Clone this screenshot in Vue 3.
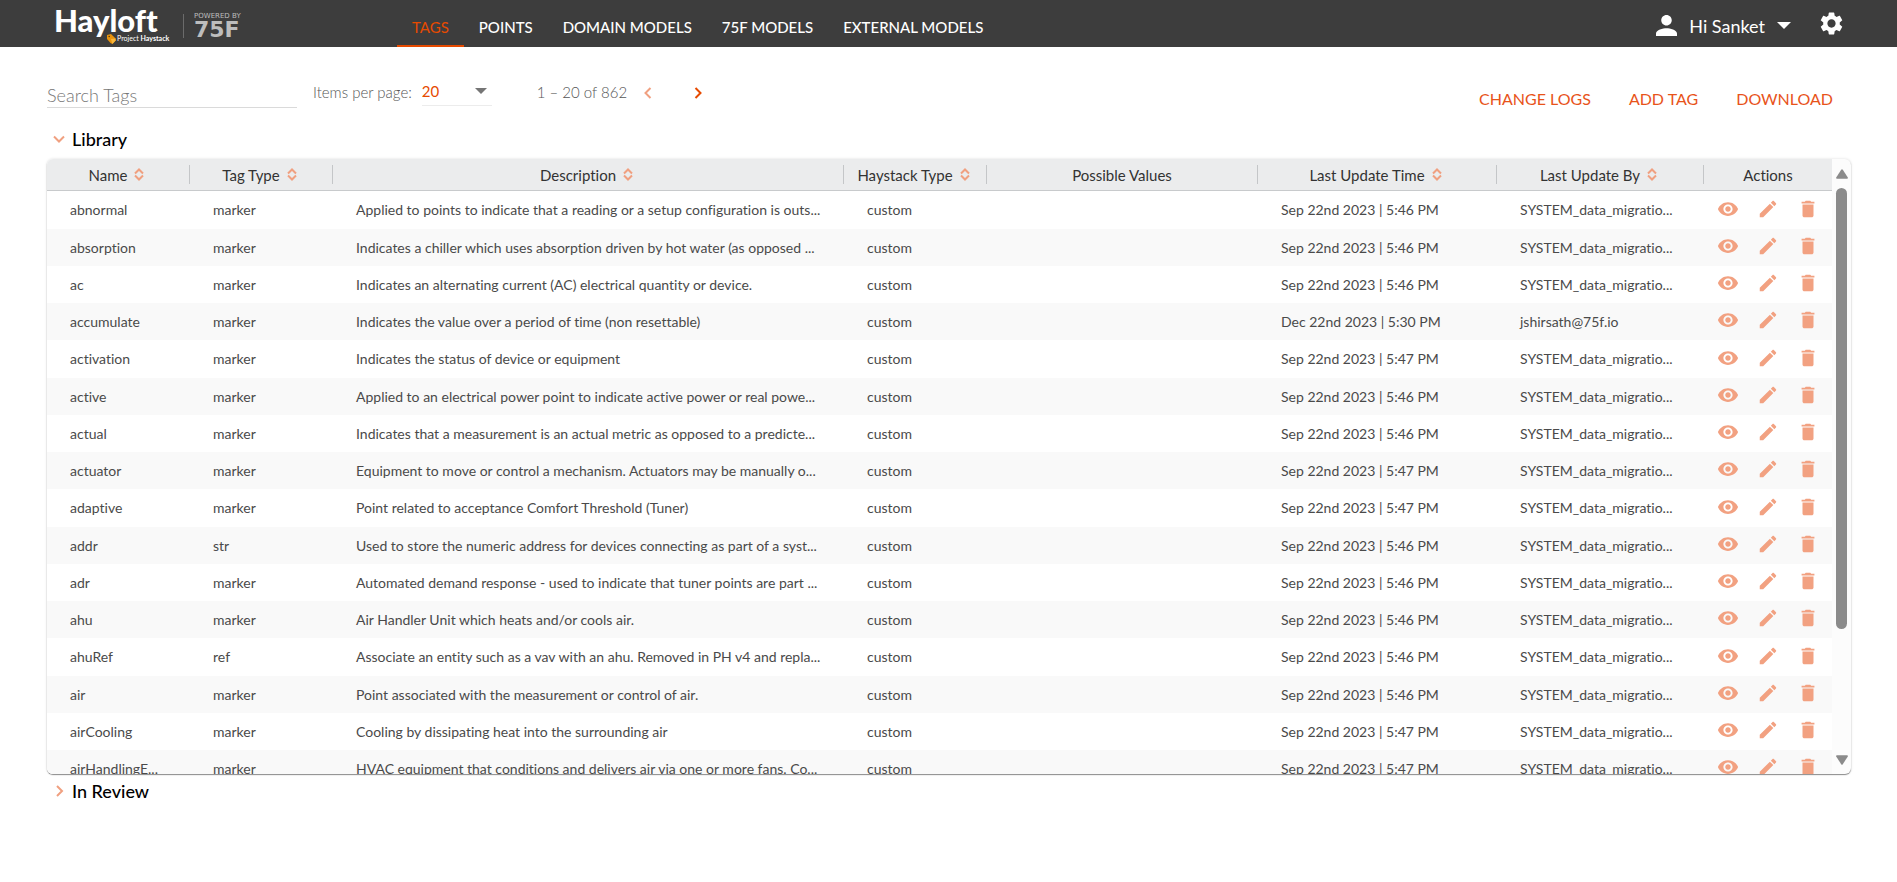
<script setup>
import { ref } from 'vue'

const search = ref('')
const pageSize = ref('20')

const nav = ['TAGS', 'POINTS', 'DOMAIN MODELS', '75F MODELS', 'EXTERNAL MODELS']

const columns = [
  { key: 'name', label: 'Name', sortable: true },
  { key: 'type', label: 'Tag Type', sortable: true },
  { key: 'desc', label: 'Description', sortable: true },
  { key: 'haystack', label: 'Haystack Type', sortable: true },
  { key: 'values', label: 'Possible Values', sortable: false },
  { key: 'time', label: 'Last Update Time', sortable: true },
  { key: 'by', label: 'Last Update By', sortable: true },
  { key: 'actions', label: 'Actions', sortable: false }
]

const system = 'SYSTEM_data_migratio...'
const sep46 = 'Sep 22nd 2023 | 5:46 PM'
const sep47 = 'Sep 22nd 2023 | 5:47 PM'

const rows = [
  ['abnormal', 'marker', 'Applied to points to indicate that a reading or a setup configuration is outs...', sep46, system],
  ['absorption', 'marker', 'Indicates a chiller which uses absorption driven by hot water (as opposed ...', sep46, system],
  ['ac', 'marker', 'Indicates an alternating current (AC) electrical quantity or device.', sep46, system],
  ['accumulate', 'marker', 'Indicates the value over a period of time (non resettable)', 'Dec 22nd 2023 | 5:30 PM', 'jshirsath@75f.io'],
  ['activation', 'marker', 'Indicates the status of device or equipment', sep47, system],
  ['active', 'marker', 'Applied to an electrical power point to indicate active power or real powe...', sep46, system],
  ['actual', 'marker', 'Indicates that a measurement is an actual metric as opposed to a predicte...', sep46, system],
  ['actuator', 'marker', 'Equipment to move or control a mechanism. Actuators may be manually o...', sep47, system],
  ['adaptive', 'marker', 'Point related to acceptance Comfort Threshold (Tuner)', sep47, system],
  ['addr', 'str', 'Used to store the numeric address for devices connecting as part of a syst...', sep46, system],
  ['adr', 'marker', 'Automated demand response - used to indicate that tuner points are part ...', sep46, system],
  ['ahu', 'marker', 'Air Handler Unit which heats and/or cools air.', sep46, system],
  ['ahuRef', 'ref', 'Associate an entity such as a vav with an ahu. Removed in PH v4 and repla...', sep46, system],
  ['air', 'marker', 'Point associated with the measurement or control of air.', sep46, system],
  ['airCooling', 'marker', 'Cooling by dissipating heat into the surrounding air', sep47, system],
  ['airHandlingE...', 'marker', 'HVAC equipment that conditions and delivers air via one or more fans. Co...', sep47, system]
].map(([name, type, desc, time, by]) => ({ name, type, desc, time, by }))
</script>

<template>
  <div class="page">
    <header class="topbar">
      <a href="#" class="brand">
        <span class="hayloft">
          <span class="wordmark">Hayloft</span>
          <span class="project">
            <svg class="tagicon" viewBox="0 0 9 10" aria-hidden="true">
              <path d="M0 1l4-1 4.6 4.4v2L5.400 10 3.500 9 0 5z" fill="#e8930c" />
              <path d="M4 5l4.600-.6v2L5.400 10z" fill="#f7b53a" />
              <circle cx="2.200" cy="2.500" r=".8" fill="#5a3a10" />
            </svg>
            <span>Project <b>Haystack</b></span>
          </span>
        </span>
        <span class="powered">
          <span class="by">POWERED BY</span>
          <span class="seventyfive">75F</span>
        </span>
      </a>
      <nav class="nav">
        <a v-for="(item, i) in nav" :key="item" href="#" :class="{ active: i === 0 }">{{ item }}</a>
      </nav>
      <button class="user" type="button">
        <svg class="person" viewBox="4 4 16 16" aria-hidden="true"><path d="M12 12c2.210 0 4-1.790 4-4s-1.790-4-4-4-4 1.790-4 4 1.790 4 4 4zm0 2c-2.670 0-8 1.340-8 4v2h16v-2c0-2.660-5.330-4-8-4z" /></svg>
        <span>Hi Sanket</span>
        <svg class="caret" viewBox="0 0 14 7" aria-hidden="true"><path d="M0 0h14L7 7z" /></svg>
      </button>
      <button class="gear" type="button" aria-label="Settings">
        <svg viewBox="2 2 20 20" aria-hidden="true"><path d="M19.140 12.940c.04-.3.06-.61.06-.94 0-.32-.02-.64-.07-.94l2.030-1.580c.18-.14.23-.41.12-.61l-1.920-3.320c-.12-.22-.37-.29-.59-.22l-2.390.96c-.5-.38-1.030-.7-1.620-.94l-.36-2.540c-.04-.24-.24-.41-.48-.41h-3.840c-.24 0-.43.17-.47.41l-.36 2.540c-.59.24-1.130.57-1.620.94l-2.390-.96c-.22-.08-.47 0-.59.22L2.740 8.870c-.12.21-.08.47.12.61l2.030 1.580c-.05.3-.09.63-.09.94s.02.64.07.94l-2.030 1.580c-.18.14-.23.41-.12.61l1.920 3.320c.12.22.37.29.59.22l2.390-.96c.5.38 1.030.7 1.620.94l.36 2.540c.05.24.24.41.48.41h3.840c.24 0 .44-.17.47-.41l.36-2.540c.59-.24 1.130-.56 1.620-.94l2.390.96c.22.08.47 0 .59-.22l1.920-3.320c.12-.22.07-.47-.12-.61l-2.010-1.580zM12 15.600c-1.980 0-3.600-1.620-3.600-3.600s1.620-3.600 3.600-3.600 3.600 1.620 3.600 3.600-1.620 3.600-3.600 3.600z" /></svg>
      </button>
    </header>

    <main class="content">
      <div class="toolbar">
        <input v-model="search" class="search" type="text" placeholder="Search Tags" aria-label="Search Tags" />
        <div class="paginator">
          <label for="page-size">Items per page:</label>
          <span class="size">
            <select id="page-size" v-model="pageSize">
              <option>20</option>
              <option>50</option>
              <option>100</option>
            </select>
            <svg viewBox="0 0 12 6" aria-hidden="true"><path d="M0 0h12L6 6z" fill="#757575" /></svg>
          </span>
          <span class="range">1 – 20 of 862</span>
          <button class="step" type="button" aria-label="Previous page" disabled>
            <svg viewBox="0 0 8 12" aria-hidden="true"><path d="M6.500 1L1.500 6l5 5" /></svg>
          </button>
          <button class="step" type="button" aria-label="Next page">
            <svg viewBox="0 0 8 12" aria-hidden="true"><path d="M1.500 1l5 5-5 5" /></svg>
          </button>
        </div>
        <div class="links">
          <button type="button">CHANGE LOGS</button>
          <button type="button">ADD TAG</button>
          <button type="button">DOWNLOAD</button>
        </div>
      </div>

      <button class="section" type="button" aria-expanded="true">
        <svg viewBox="0 0 12 12" aria-hidden="true"><path d="M1 3.500l5 5 5-5" /></svg>
        <span>Library</span>
      </button>

      <div class="panel">
        <div class="viewport">
          <table>
            <colgroup>
              <col v-for="c in columns" :key="c.key" :class="'c-' + c.key" />
            </colgroup>
            <thead>
              <tr>
                <th v-for="c in columns" :key="c.key" scope="col">
                  <div class="head">
                    <span>{{ c.label }}</span>
                    <button v-if="c.sortable" type="button" :aria-label="'Sort by ' + c.label">
                      <svg viewBox="0 0 10 13" aria-hidden="true"><path d="M1 5.500l4-4 4 4M1 7.500l4 4 4-4" /></svg>
                    </button>
                  </div>
                </th>
              </tr>
            </thead>
            <tbody>
              <tr v-for="r in rows" :key="r.name">
                <td>{{ r.name }}</td>
                <td>{{ r.type }}</td>
                <td>{{ r.desc }}</td>
                <td>custom</td>
                <td></td>
                <td>{{ r.time }}</td>
                <td>{{ r.by }}</td>
                <td class="actions">
                  <div>
                    <button type="button" :aria-label="'View ' + r.name">
                      <svg viewBox="0 0 24 24" aria-hidden="true"><path d="M12 4.500C7 4.500 2.730 7.610 1 12c1.730 4.390 6 7.500 11 7.500s9.270-3.110 11-7.500c-1.730-4.390-6-7.500-11-7.500zM12 17c-2.760 0-5-2.240-5-5s2.240-5 5-5 5 2.240 5 5-2.240 5-5 5zm0-8c-1.660 0-3 1.340-3 3s1.340 3 3 3 3-1.340 3-3-1.340-3-3-3z" /></svg>
                    </button>
                    <button type="button" :aria-label="'Edit ' + r.name">
                      <svg viewBox="0 0 24 24" aria-hidden="true"><path d="M3 17.250V21h3.750L17.810 9.940l-3.750-3.750L3 17.250zM20.710 7.040c.39-.39.39-1.020 0-1.410l-2.340-2.340c-.39-.39-1.020-.39-1.410 0l-1.830 1.830 3.750 3.750 1.830-1.830z" /></svg>
                    </button>
                    <button type="button" :aria-label="'Delete ' + r.name">
                      <svg viewBox="0 0 24 24" aria-hidden="true"><path d="M6 19c0 1.100.9 2 2 2h8c1.100 0 2-.9 2-2V7H6v12zM19 4h-3.500l-1-1h-5l-1 1H5v2h14V4z" /></svg>
                    </button>
                  </div>
                </td>
              </tr>
            </tbody>
          </table>
        </div>
        <div class="scrollbar" aria-hidden="true">
          <svg viewBox="0 0 12 10"><path d="M5.200.8q.8-1 1.600 0L11.800 8.500q.4 1.200-.8 1.200H1Q-.2 9.700.2 8.500z" /></svg>
          <div class="track"><div class="thumb"></div></div>
          <svg viewBox="0 0 12 10"><path d="M5.200 9.200q.8 1 1.600 0L11.800 1.500Q12.200.3 11 .3H1Q-.2.3.2 1.500z" /></svg>
        </div>
      </div>

      <button class="section" type="button" aria-expanded="false">
        <svg viewBox="0 0 12 12" aria-hidden="true"><path d="M4 1l5 5-5 5" /></svg>
        <span>In Review</span>
      </button>
    </main>
  </div>
</template>

<style>
body {
  background: #fff;
}
</style>

<style scoped>
.page {
  font-family: Lato, "Liberation Sans", sans-serif;
  font-variant-ligatures: no-common-ligatures;
  color: #333;
}
button {
  font: inherit;
  font-variant-ligatures: inherit;
  color: inherit;
  border: 0;
  padding: 0;
  background: none;
  cursor: pointer;
}
svg {
  display: block;
  flex: none;
}
.topbar {
  display: flex;
  height: 47px;
  padding: 0 54px;
  background: #3d3d3d;
  color: #fff;
}
.brand {
  display: flex;
  width: 343px;
  color: #fff;
  text-decoration: none;
}
.hayloft {
  display: flex;
  flex-direction: column;
  width: 129px;
  height: 24px;
  margin-top: 14px;
  border-right: 1px solid #6b6b6b;
}
.wordmark {
  font-size: 31px;
  line-height: 28px;
  font-weight: 900;
  margin-top: -8px;
}
.project {
  display: flex;
  gap: 1px;
  margin-left: 53px;
  font-size: 7px;
  line-height: 8px;
  white-space: nowrap;
}
.tagicon {
  width: 9px;
  height: 10px;
}
.powered {
  display: flex;
  flex-direction: column;
  padding: 12px 0 0 10px;
  color: #bdbdbd;
}
.by {
  font: 7px/8px "DejaVu Sans", sans-serif;
}
.seventyfive {
  font: bold 22px/20px "DejaVu Sans", sans-serif;
}
.nav {
  display: flex;
  flex: 1;
}
.nav a {
  box-sizing: border-box;
  height: 47px;
  padding: 15px 15px 0;
  border-bottom: 2px solid transparent;
  font-size: 15px;
  line-height: 24px;
  font-weight: 500;
  color: #fff;
  text-decoration: none;
  white-space: nowrap;
}
.nav a.active {
  color: #e64a00;
  border-color: #e64a00;
  font-weight: 400;
}
.user {
  display: flex;
  align-items: center;
  gap: 12px;
  padding-top: 4px;
  font-size: 18px;
}
.user svg,
.gear svg {
  fill: #fff;
}
.person {
  width: 21px;
  height: 21px;
}
.caret {
  width: 14px;
  height: 7px;
}
.gear {
  margin-left: 29px;
}
.gear svg {
  width: 23px;
  height: 23px;
}
.content {
  padding: 31px 46px 0 47px;
}
.toolbar {
  display: flex;
  align-items: flex-start;
}
.search {
  box-sizing: border-box;
  width: 250px;
  height: 30px;
  padding: 4px 0 0;
  border: 0;
  border-bottom: 1px solid #dadada;
  background: none;
  font: 300 18px/24px Lato, "Liberation Sans", sans-serif;
  color: #333;
  outline: none;
}
.search::placeholder {
  color: #777;
  opacity: 1;
}
.paginator {
  display: flex;
  align-items: center;
  height: 27px;
  margin-left: 16px;
  font-size: 15px;
  font-weight: 300;
  color: #555;
}
.size {
  position: relative;
  width: 70px;
  margin-left: 10px;
  border-bottom: 1px solid #ececec;
}
.size select {
  display: block;
  width: 100%;
  height: 28px;
  padding: 0;
  border: 0;
  appearance: none;
  background: none;
  font: 400 15px/28px Lato, "Liberation Sans", sans-serif;
  color: #e64a00;
}
.size svg {
  position: absolute;
  right: 5px;
  top: 11px;
  width: 12px;
  height: 6px;
  pointer-events: none;
}
.range {
  margin: 0 15px 0 45px;
}
.step {
  width: 12px;
  margin-right: 38px;
}
.step svg {
  width: 8px;
  height: 12px;
  margin: 3px auto 0;
}
.step path,
.section path,
.head path {
  fill: none;
  stroke: #e64a00;
  stroke-width: 2;
}
.step:disabled path,
.section path,
.head path {
  stroke: #f0a080;
}
.links {
  display: flex;
  gap: 38px;
  margin: 11px 18px 0 auto;
  font-size: 16px;
  line-height: 20px;
  color: #e8531a;
}
.section {
  display: flex;
  align-items: center;
  gap: 7px;
  height: 31px;
  margin-top: 1px;
  padding-left: 6px;
  font-size: 18px;
  font-weight: 500;
  color: #000;
}
.section svg {
  width: 12px;
  height: 12px;
}
.toolbar + .section {
  margin-top: 14px;
}
.panel {
  display: flex;
  height: 615px;
  margin-top: 5px;
  border-radius: 6px;
  overflow: hidden;
  background: #fcfcfc;
  box-shadow: 0 1px 1px #8c8c8c, 0 0 3px #ddd;
}
.viewport {
  flex: 1;
  min-width: 0;
  overflow: hidden;
  background: #fff;
}
table {
  width: 100%;
  table-layout: fixed;
  border-collapse: separate;
  border-spacing: 0;
}
.c-name,
.c-type,
.c-haystack {
  width: 143px;
}
.c-values {
  width: 271px;
}
.c-time {
  width: 239px;
}
.c-by {
  width: 207px;
}
.c-actions {
  width: 128px;
}
th {
  height: 31px;
  padding: 0;
  background: #ebeced;
  border-bottom: 1px solid #c8cacc;
  font-size: 15px;
  font-weight: 400;
}
.head {
  display: flex;
  align-items: center;
  justify-content: center;
  gap: 7px;
  height: 19px;
  border-right: 1px solid #c4c6c8;
  white-space: nowrap;
}
th:last-child .head {
  border-right: 0;
}
.head button {
  margin-right: 3px;
}
.head svg {
  width: 10px;
  height: 13px;
}
td {
  box-sizing: border-box;
  height: 37px;
  padding: 0 0 0 23px;
  font-size: 14px;
  line-height: 20px;
  white-space: nowrap;
  color: #4a4a4a;
}
tbody tr:nth-child(4n + 1) td {
  height: 38px;
}
tbody tr:nth-child(even) {
  background: #f9f9f9;
}
td.actions {
  padding: 0 0 3px 4px;
}
.actions div {
  display: flex;
}
.actions button {
  width: 40px;
}
.actions svg {
  width: 22px;
  height: 22px;
  margin: 0 auto;
  fill: #f2a181;
}
.scrollbar {
  display: flex;
  flex-direction: column;
  align-items: center;
  width: 19px;
  padding: 10px 0 9px;
  box-sizing: border-box;
}
.scrollbar svg {
  width: 12px;
  height: 10px;
  fill: #8b8b8b;
}
.track {
  flex: 1;
  margin: 9px 0;
}
.thumb {
  width: 11px;
  height: 79%;
  border-radius: 6px;
  background: #8b8b8b;
}
</style>
